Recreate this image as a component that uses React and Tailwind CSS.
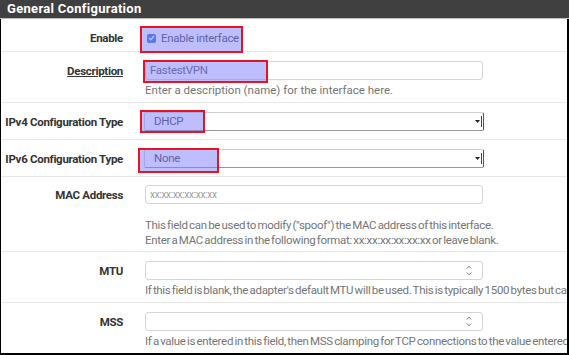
import React from "react";

function Row({ label, underline, height, children, labelTop }) {
  return (
    <div className="flex border-b border-[#e6e6e6]" style={{ height }}>
      <div className="w-[122px] shrink-0 flex justify-end whitespace-nowrap font-bold text-[11.5px] leading-[16px] text-[#333] tracking-[-0.3px]" style={{ paddingTop: labelTop }}>
        <span className={underline ? "underline" : ""}>{label}</span>
      </div>
      <div className="ml-[22px] flex-1 min-w-0">{children}</div>
    </div>
  );
}

function TextInput({ value, placeholder }) {
  return (
    <div className="w-[338px] h-[19px] border border-[#d4d4d4] rounded-[3px] bg-white flex items-center px-[4px] text-[11.5px] tracking-[-0.3px] text-[#555]">
      {value ? value : <span className="text-[10px] text-[#9a9a9a] tracking-[-0.3px]">{placeholder}</span>}
    </div>
  );
}

function SelectBox({ value }) {
  return (
    <div className="relative w-[340px] h-[19px] border border-[#d0d0d0] border-r-[#555] border-b-[#999] rounded-[2px] bg-white flex items-center pl-[9px] text-[11.5px] tracking-[-0.3px] text-[#444]">
      {value}
      <div className="absolute right-[1px] top-[3px] bottom-[3px] w-[8px] border-r border-[#444] flex items-center justify-center">
        <svg width="5" height="3" viewBox="0 0 5 3"><path d="M0 0h5L2.5 3z" fill="#222" /></svg>
      </div>
    </div>
  );
}

function NumInput() {
  return (
    <div className="relative w-[338px] h-[19px] border border-[#d4d4d4] rounded-[3px] bg-white">
      <svg className="absolute right-[10px] top-[3px]" width="6" height="11" viewBox="0 0 6 11">
        <path d="M0.8 3.5L3 1.2L5.2 3.5M0.8 7.5L3 9.8L5.2 7.5" fill="none" stroke="#777" strokeWidth="1" />
      </svg>
    </div>
  );
}

function Help({ children, className = "", tight }) {
  return (
    <div
      className={
        "text-[11.5px] leading-[15px] text-[#757575] whitespace-nowrap " +
        (tight ? "tracking-[-0.3px] [word-spacing:-1.2px] " : "") +
        className
      }
    >
      {children}
    </div>
  );
}

function Mark({ left, top, width, height }) {
  return (
    <div
      className="absolute border-2 border-[#e8131f] bg-[rgba(125,125,255,0.5)]"
      style={{ left, top, width, height }}
    />
  );
}

export default function App() {
  return (
    <div className="relative w-[569px] h-[355px] overflow-hidden bg-white font-['Roboto',sans-serif]">
      <div className="h-[19px] bg-[#404040] border-b border-[#bdbdbd] pl-[7px] text-white font-bold text-[13px] leading-[18px] tracking-[0.3px]">
        General Configuration
      </div>
      <div className="border-l border-black border-r-[2px] border-r-black border-b-[2px] border-b-black h-[336px] overflow-hidden">
        <Row label="Enable" height={33} labelTop={11}>
          <div className="flex items-center pt-[11px] pl-[2px] gap-[5px] text-[11.5px] tracking-[-0.3px] leading-[16px] text-[#444]">
            <div className="w-[9px] h-[9px] rounded-[2px] bg-[#2f79d0] flex items-center justify-center">
              <svg width="7" height="6" viewBox="0 0 7 6"><path d="M1 3l1.8 1.8L6 1" fill="none" stroke="white" strokeWidth="1.4" /></svg>
            </div>
            <span>Enable interface</span>
          </div>
        </Row>
        <Row label="Description" underline height={51} labelTop={11}>
          <div className="pt-[9px]">
            <TextInput value="FastestVPN" />
            <Help className="mt-[3px]">Enter a description (name) for the interface here.</Help>
          </div>
        </Row>
        <Row label="IPv4 Configuration Type" height={37} labelTop={11}>
          <div className="pt-[9px] -ml-[1px]">
            <SelectBox value="DHCP" />
          </div>
        </Row>
        <Row label="IPv6 Configuration Type" height={37} labelTop={11}>
          <div className="pt-[9px] -ml-[1px]">
            <SelectBox value="None" />
          </div>
        </Row>
        <Row label="MAC Address" height={75} labelTop={10}>
          <div className="pt-[8px]">
            <TextInput placeholder="xx:xx:xx:xx:xx:xx" />
            <Help tight className="mt-[14px]">This field can be used to modify ("spoof") the MAC address of this interface.</Help>
            <Help tight>Enter a MAC address in the following format: xx:xx:xx:xx:xx:xx or leave blank.</Help>
          </div>
        </Row>
        <Row label="MTU" height={51} labelTop={11}>
          <div className="pt-[9px]">
            <NumInput />
            <Help tight className="mt-[3px]">If this field is blank, the adapter's default MTU will be used. This is typically 1500 bytes but can vary in some circumstances.</Help>
          </div>
        </Row>
        <Row label="MSS" height={51} labelTop={11}>
          <div className="pt-[9px]">
            <NumInput />
            <Help tight className="mt-[3px]">If a value is entered in this field, then MSS clamping for TCP connections to the value entered above minus 40 will be in effect.</Help>
          </div>
        </Row>
      </div>
      <Mark left={140} top={26} width={103} height={27} />
      <Mark left={143} top={60} width={125} height={23} />
      <Mark left={140} top={110} width={65} height={23} />
      <Mark left={138} top={148} width={81} height={25} />
    </div>
  );
}
